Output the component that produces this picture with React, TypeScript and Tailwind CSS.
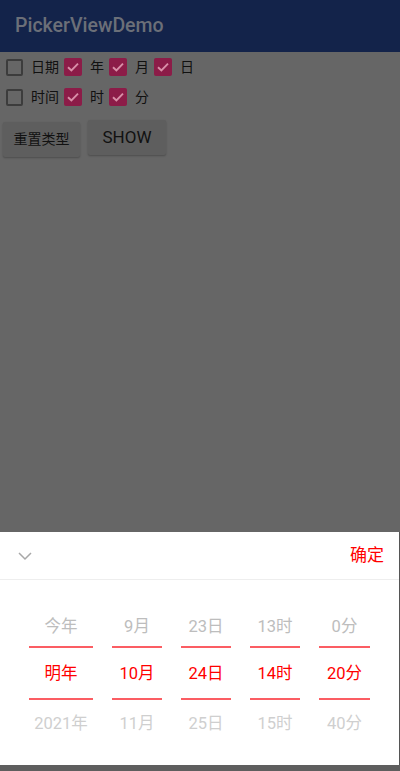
import React from 'react';

const font = { fontFamily: 'Roboto, "Noto Sans CJK SC", sans-serif' };

function Box({ checked }: { checked: boolean }) {
  if (!checked) {
    return <div className="h-[17px] w-[17px] rounded-[2px] border-2 border-[#3c3c3c]" />;
  }
  return (
    <div className="flex h-[18px] w-[18px] items-center justify-center rounded-[2px] bg-[#8c1c48]">
      <svg width="14" height="14" viewBox="0 0 14 14" fill="none">
        <path d="M2 7.2 L5.4 10.4 L12 3.6" stroke="#d98fa8" strokeWidth="1.9" />
      </svg>
    </div>
  );
}

function Check({ checked, label }: { checked: boolean; label: string }) {
  return (
    <div className="flex items-center gap-[8px] pr-[5px]">
      <Box checked={checked} />
      <span className="text-[14px] leading-none text-[#111]">{label}</span>
    </div>
  );
}

const columns = [
  ['今年', '明年', '2021年'],
  ['9月', '10月', '11月'],
  ['23日', '24日', '25日'],
  ['13时', '14时', '15时'],
  ['0分', '20分', '40分'],
];

const widths = ['w-[64px]', 'w-[50px]', 'w-[50px]', 'w-[50px]', 'w-[51px]'];

export default function App() {
  return (
    <div className="flex h-[771px] w-[400px] flex-col bg-[#666666]" style={font}>
      <header className="flex h-[52px] items-center bg-[#13234a] pl-[15px]">
        <span className="text-[19.5px] font-medium text-[#6b6f78]">PickerViewDemo</span>
      </header>

      <div className="flex flex-1 flex-col">
        <div className="mt-[6px] flex h-[18px] items-center pl-[6px]">
          <Check checked={false} label="日期" />
          <Check checked label="年" />
          <Check checked label="月" />
          <Check checked label="日" />
        </div>
        <div className="mt-[12px] flex h-[18px] items-center pl-[6px]">
          <Check checked={false} label="时间" />
          <Check checked label="时" />
          <Check checked label="分" />
        </div>
        <div className="mt-[14px] flex items-start gap-[8px] pl-[3px]">
          <button className="mt-[2px] h-[35px] w-[77px] rounded-[2px] bg-[#5e5e5e] text-[14px] text-[#111] shadow-[0_1px_2px_rgba(0,0,0,0.25)]">
            重置类型
          </button>
          <button className="h-[35px] w-[78px] rounded-[2px] bg-[#5e5e5e] text-[17px] text-[#111] shadow-[0_1px_2px_rgba(0,0,0,0.25)]">
            SHOW
          </button>
        </div>
      </div>

      <div className="h-[233px] border-r border-[#555] bg-white">
        <div className="flex h-[48px] items-center justify-between border-b border-[#eeeeee] pl-[17px] pr-[15px]">
          <svg width="16" height="10" viewBox="0 0 16 10" fill="none">
            <path d="M2 2 L8 8 L14 2" stroke="#a8a8a8" strokeWidth="1.5" />
          </svg>
          <span className="text-[17px] text-[#ff0000]">确定</span>
        </div>
        <div className="flex justify-center gap-[19px] pt-[33px]">
          {columns.map((col, i) => (
            <div key={i} className={`flex flex-col items-center ${widths[i]}`}>
              <div className="flex h-[29px] items-center text-[16.5px] text-[#bdbdbd]">{col[0]}</div>
              <div className="mt-[4px] h-[2px] w-full bg-[#fb5d63]" />
              <div className="flex h-[50px] items-center pt-[2px] text-[16.5px] text-[#ff0000]">{col[1]}</div>
              <div className="h-[2px] w-full bg-[#fb5d63]" />
              <div className="mt-[12px] flex h-[25px] items-center text-[16.5px] text-[#cfcfcf]">{col[2]}</div>
            </div>
          ))}
        </div>
      </div>
      <div className="h-[6px] bg-[#5e5e5e]" />
    </div>
  );
}
